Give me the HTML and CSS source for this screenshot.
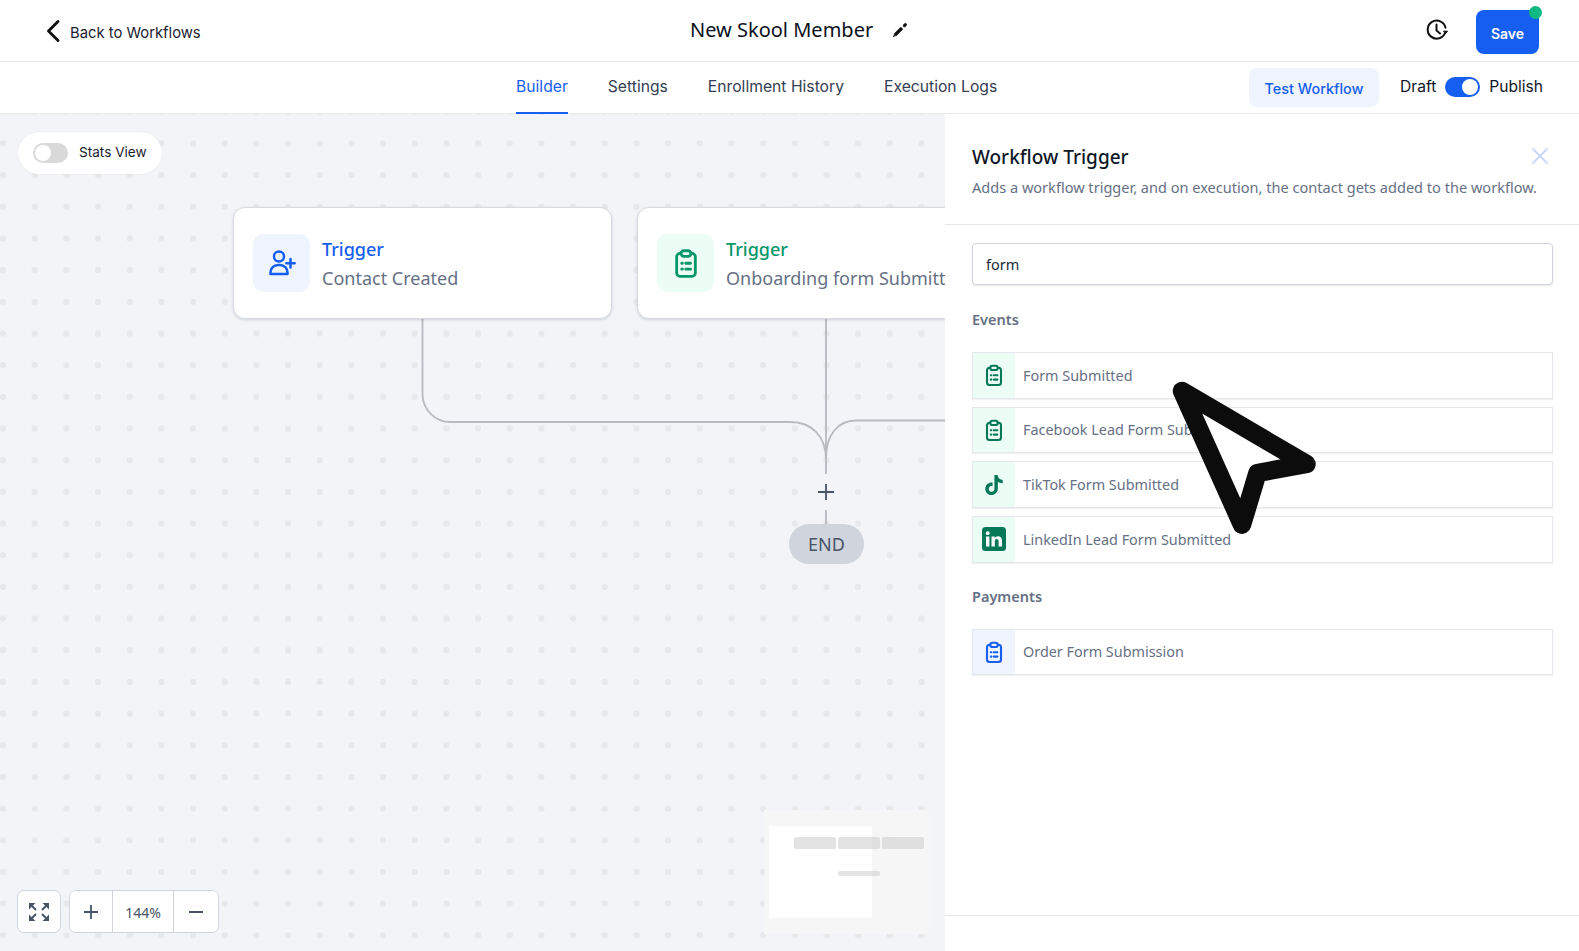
FILE: index.html

```html
<!DOCTYPE html>
<html lang="en">
<head>
  <meta charset="UTF-8" />
  <title>New Skool Member</title>
  <link rel="stylesheet" href="styles.css">
</head>
<body>

<svg class="defs" width="0" height="0">
  <symbol id="clipboard" viewBox="0 0 24 24">
    <path d="M8 4.800H7.500A2.500 2.500 0 0 0 5 7.300v12.200A2.500 2.500 0 0 0 7.500 22h9a2.500 2.500 0 0 0 2.500-2.500V7.300a2.500 2.500 0 0 0-2.500-2.500H16" fill="none" stroke="currentColor" stroke-width="2.100" stroke-linecap="round"/>
    <rect x="8.300" y="2.800" width="7.400" height="4.200" rx="2.100" fill="none" stroke="currentColor" stroke-width="2.100"/>
    <path d="M8.800 12.200h.5M11.800 12.200h3.600M8.800 16.600h.5M11.800 16.600h3.600" fill="none" stroke="currentColor" stroke-width="2.100" stroke-linecap="round"/>
  </symbol>
</svg>

<header class="topbar">
  <a class="back">
    <svg width="18" height="24" viewBox="0 0 18 24"><path d="M14 2.500 4.500 12l9.500 9.500" fill="none" stroke="#111" stroke-width="2.900" stroke-linecap="round" stroke-linejoin="round"/></svg>
    <span>Back to Workflows</span>
  </a>
  <div class="title">
    <h1>New Skool Member</h1>
    <svg width="16" height="16" viewBox="0 0 16 16"><path d="M3 13l7-7" fill="none" stroke="#111" stroke-width="3.200"/><path d="M1 15l1-3 2 2z" fill="#111"/><path d="M12.400 3.600l1-1" fill="none" stroke="#111" stroke-width="3" stroke-linecap="round"/></svg>
  </div>
  <div class="top-actions">
    <svg class="history" width="24" height="24" viewBox="0 0 24 24"><path d="M20.200 14.500A9 9 0 1 1 20.500 9.800" fill="none" stroke="#111" stroke-width="2" stroke-linecap="round"/><path d="M11.500 6.500v6l3.500 3" fill="none" stroke="#111" stroke-width="2" stroke-linecap="round" stroke-linejoin="round"/><path d="M18.500 13.200h4l-2 2.600z" fill="#111" stroke="#111" stroke-width="1" stroke-linejoin="round"/></svg>
    <button class="save">Save<i class="save-dot"></i></button>
  </div>
</header>

<nav class="tabbar">
  <ul class="tabs">
    <li class="active">Builder</li>
    <li>Settings</li>
    <li>Enrollment History</li>
    <li>Execution Logs</li>
  </ul>
  <div class="publish">
    <button class="test">Test Workflow</button>
    <span>Draft</span>
    <i class="switch on"></i>
    <span>Publish</span>
  </div>
</nav>

<main class="main">
  <section class="canvas">
    <div class="stats">
      <i class="switch"></i>
      <span>Stats View</span>
    </div>

    <svg class="wires" width="945" height="838" viewBox="0 0 945 838">
      <path d="M422.500 205v75a28 28 0 0 0 28 28H790c22 0 36 14 36 38M826 205v155M945 306.500H856c-18 0-30 14-30 38M826 396v14" fill="none" stroke="#b9bac0" stroke-width="1.800"/>
    </svg>

    <div class="node node-one">
      <div class="node-icon blue">
        <svg width="32" height="32" viewBox="0 0 32 32"><circle cx="13" cy="9.500" r="5" fill="none" stroke="currentColor" stroke-width="2.500"/><path d="M4.500 27v-1.500a7.500 7.500 0 0 1 7.500-7.500h2a7.500 7.500 0 0 1 7.500 7.500V27z" fill="none" stroke="currentColor" stroke-width="2.500" stroke-linejoin="round"/><path d="M24.500 12v8.500M20.300 16.200h8.400" fill="none" stroke="currentColor" stroke-width="2.500" stroke-linecap="round"/></svg>
      </div>
      <div class="node-text">
        <div class="node-kind blue-text">Trigger</div>
        <div class="node-name">Contact Created</div>
      </div>
    </div>

    <div class="node node-two">
      <div class="node-icon green">
        <svg width="32" height="32"><use href="#clipboard"/></svg>
      </div>
      <div class="node-text">
        <div class="node-kind green-text">Trigger</div>
        <div class="node-name">Onboarding form Submitted</div>
      </div>
    </div>

    <svg class="add" width="18" height="18" viewBox="0 0 18 18"><path d="M9 1v16M1 9h16" fill="none" stroke="#475467" stroke-width="1.800"/></svg>
    <div class="end">END</div>

    <div class="minimap">
      <div class="mini-view"></div>
      <i class="mini-bar b1"></i>
      <i class="mini-bar b2"></i>
      <i class="mini-bar b3"></i>
      <i class="mini-bar b4"></i>
    </div>

    <div class="zoom-tools">
      <button class="tool fit">
        <svg width="20" height="20" viewBox="0 0 20 20"><path d="M0 1h6.500L0 7.500zM20 1h-6.500L20 7.500zM0 19h6.500L0 12.500zM20 19h-6.500L20 12.500z" fill="#475467"/><path d="M3 4l4 4M17 4l-4 4M3 16l4-4M17 16l-4-4" fill="none" stroke="#475467" stroke-width="2"/></svg>
      </button>
      <div class="tool-group">
        <button class="tool">
          <svg width="16" height="16" viewBox="0 0 16 16"><path d="M8 1v14M1 8h14" fill="none" stroke="#475467" stroke-width="1.800"/></svg>
        </button>
        <span class="zoom-value">144%</span>
        <button class="tool">
          <svg width="16" height="16" viewBox="0 0 16 16"><path d="M1 8h14" fill="none" stroke="#475467" stroke-width="1.800"/></svg>
        </button>
      </div>
    </div>
  </section>

  <aside class="panel">
    <div class="panel-head">
      <div class="panel-title">
        <h2>Workflow Trigger</h2>
        <p>Adds a workflow trigger, and on execution, the contact gets added to the workflow.</p>
      </div>
      <svg class="close" width="18" height="18" viewBox="0 0 18 18"><path d="M2 2l14 14M16 2 2 16" fill="none" stroke="#c7d7fe" stroke-width="1.800" stroke-linecap="round"/></svg>
    </div>

    <div class="panel-body">
      <input class="search" type="text" value="form" />

      <h3>Events</h3>
      <div class="list">
        <div class="item">
          <div class="item-icon green"><svg width="24" height="24"><use href="#clipboard"/></svg></div>
          <span>Form Submitted</span>
        </div>
        <div class="item">
          <div class="item-icon green"><svg width="24" height="24"><use href="#clipboard"/></svg></div>
          <span>Facebook Lead Form Submitted</span>
        </div>
        <div class="item">
          <div class="item-icon green">
            <svg width="20" height="20" viewBox="0 0 24 24"><path fill="currentColor" d="M12.525.02c1.310-.020 2.610-.010 3.910-.020.080 1.530.630 3.090 1.750 4.170 1.120 1.110 2.700 1.620 4.240 1.790v4.030c-1.440-.050-2.890-.350-4.200-.970-.570-.260-1.100-.590-1.620-.930-.010 2.920.010 5.840-.020 8.750-.080 1.400-.540 2.790-1.350 3.940-1.310 1.920-3.580 3.170-5.910 3.210-1.430.080-2.860-.310-4.080-1.030-2.020-1.190-3.440-3.370-3.650-5.710-.020-.500-.030-1-.010-1.490.180-1.900 1.120-3.720 2.580-4.960 1.660-1.440 3.980-2.130 6.150-1.720.020 1.480-.040 2.960-.040 4.440-.990-.320-2.150-.230-3.020.370-.630.410-1.110 1.040-1.360 1.750-.210.510-.150 1.070-.140 1.610.240 1.640 1.820 3.020 3.500 2.870 1.120-.010 2.190-.660 2.770-1.610.190-.330.400-.670.410-1.060.100-1.790.060-3.570.070-5.360.010-4.030-.010-8.050.020-12.070z"/></svg>
          </div>
          <span>TikTok Form Submitted</span>
        </div>
        <div class="item">
          <div class="item-icon green">
            <svg width="24" height="24" viewBox="0 0 24 24"><rect width="24" height="24" rx="3.500" fill="currentColor"/><rect x="4" y="9.500" width="3.400" height="10" fill="#fff"/><circle cx="5.700" cy="6.200" r="1.900" fill="#fff"/><path d="M9.500 9.500h3.200v1.500c.7-1.100 1.900-1.800 3.300-1.800 2.700 0 4 1.700 4 4.500v5.800h-3.400v-5.200c0-1.500-.6-2.300-1.800-2.300s-2 .9-2 2.300v5.200H9.500z" fill="#fff"/></svg>
          </div>
          <span>LinkedIn Lead Form Submitted</span>
        </div>
      </div>

      <h3 class="second">Payments</h3>
      <div class="list">
        <div class="item">
          <div class="item-icon blue"><svg width="24" height="24"><use href="#clipboard"/></svg></div>
          <span>Order Form Submission</span>
        </div>
      </div>
    </div>

    <div class="panel-foot"></div>
  </aside>
</main>

<svg class="pointer" width="160" height="170" viewBox="0 0 160 170"><path d="M12 11 136.500 84 87.500 93 72 144.700z" fill="#fff" stroke="#0c0c0c" stroke-width="18.500" stroke-linejoin="round"/></svg>

</body>
</html>
```

FILE: styles.css

```css
* {
  box-sizing: border-box;
}
html, body {
  height: 100%;
}
body {
  font-family: "Noto Sans", Arial, sans-serif;
  margin: 0;
  background: #fff;
  color: #111;
  overflow: hidden;
  position: relative;
}
button {
  font-family: inherit;
}
.defs {
  position: absolute;
}

/* top bar */
.topbar {
  height: 62px;
  display: flex;
  align-items: center;
  position: relative;
  padding: 0 40px 0 44px;
  border-bottom: 1px solid #e9eaec;
}
.back {
  display: flex;
  align-items: center;
  gap: 8px;
  font-family: Inter, Arial, sans-serif;
  font-size: 14.800px;
  color: #1b2230;
}
.back span {
  padding-top: 4px;
}
.title {
  position: absolute;
  left: 690px;
  top: 13px;
  display: flex;
  align-items: center;
  gap: 19px;
}
.title h1 {
  margin: 0;
  font-size: 20px;
  font-weight: 400;
  color: #0c111d;
  line-height: 33px;
}
.top-actions {
  margin-left: auto;
  display: flex;
  align-items: center;
  gap: 27px;
  padding-top: 2px;
}
.history {
  margin-top: -3px;
}
.save {
  width: 63px;
  height: 44px;
  position: relative;
  border: none;
  border-radius: 8px;
  background: #155eef;
  color: #fff;
  font-family: Inter, Arial, sans-serif;
  font-size: 14px;
  font-weight: 600;
  padding-top: 5px;
}
.save-dot {
  position: absolute;
  top: -4px;
  right: -3px;
  width: 13px;
  height: 13px;
  border-radius: 50%;
  background: #10b981;
}

/* tabs */
.tabbar {
  height: 52px;
  display: flex;
  align-items: stretch;
  padding: 0 36px 0 516px;
  border-bottom: 1px solid #e9eaec;
  font-family: Inter, Arial, sans-serif;
}
.tabs {
  list-style: none;
  margin: 0;
  padding: 0;
  display: flex;
  gap: 40px;
  font-size: 15.700px;
  color: #344054;
}
.tabs li {
  padding-top: 15px;
  height: 52px;
}
.tabs .active {
  color: #155eef;
  border-bottom: 2px solid #155eef;
}
.publish {
  margin-left: auto;
  display: flex;
  align-items: center;
  gap: 9px;
  font-size: 15.600px;
  color: #101828;
  padding-bottom: 2px;
}
.test {
  width: 130px;
  height: 39px;
  margin: 2px 12px 0 0;
  border: none;
  border-radius: 8px;
  background: #eff4ff;
  color: #155eef;
  font-family: inherit;
  font-size: 14.400px;
  font-weight: 500;
  padding-top: 2px;
}
.switch {
  display: block;
  position: relative;
  width: 35px;
  height: 20px;
  border-radius: 10px;
  background: #d9d9d9;
}
.switch:after {
  content: "";
  position: absolute;
  left: 2px;
  top: 2px;
  width: 16px;
  height: 16px;
  border-radius: 50%;
  background: #fff;
}
.switch.on {
  background: #155eef;
}
.switch.on:after {
  left: 17px;
}

/* canvas */
.main {
  display: flex;
  height: 837px;
}
.canvas {
  position: relative;
  width: 945px;
  overflow: hidden;
  background-color: #f2f4f8;
  background-image: radial-gradient(circle, #e7e8ea 3px, transparent 3.500px);
  background-size: 31.680px 31.680px;
  background-position: -12.840px 13.660px;
}
.stats {
  position: absolute;
  left: 18px;
  top: 18px;
  width: 144px;
  height: 42px;
  display: flex;
  align-items: center;
  gap: 11px;
  padding-left: 15px;
  border-radius: 21px;
  background: #fff;
  box-shadow: 0 0 2px rgba(16, 24, 40, 0.08);
  font-family: Inter, Arial, sans-serif;
  font-size: 13.600px;
  color: #1b2230;
}
.stats span {
  padding-bottom: 2px;
}
.wires {
  position: absolute;
  left: 0;
  top: 0;
}
.node {
  position: absolute;
  top: 93px;
  width: 379px;
  height: 112px;
  display: flex;
  align-items: center;
  gap: 12px;
  padding-left: 19px;
  background: #fff;
  border: 1px solid #d8dae0;
  border-radius: 12px;
  box-shadow: 0 1px 3px rgba(16, 24, 40, 0.15);
}
.node-one {
  left: 233px;
}
.node-two {
  left: 637px;
  white-space: nowrap;
}
.node-icon {
  width: 57px;
  height: 58px;
  flex: none;
  display: flex;
  align-items: center;
  justify-content: center;
  border-radius: 10px;
}
.blue {
  background: #eff4ff;
  color: #155eef;
}
.green {
  background: #ebfdf4;
  color: #047857;
}
.node-icon.green {
  color: #059669;
}
.node-text {
  margin-top: 4px;
}
.node-kind {
  font-size: 18px;
  font-weight: 500;
  line-height: 26px;
}
.blue-text {
  color: #155eef;
}
.green-text {
  color: #059669;
}
.node-name {
  font-size: 18px;
  line-height: 33px;
  color: #667085;
}
.add {
  position: absolute;
  left: 817px;
  top: 369px;
}
.end {
  position: absolute;
  left: 789px;
  top: 410px;
  width: 75px;
  height: 40px;
  border-radius: 20px;
  background: #d0d5dd;
  color: #475467;
  font-size: 18px;
  line-height: 40px;
  text-align: center;
}
.minimap {
  position: absolute;
  left: 764px;
  top: 696px;
  width: 165px;
  height: 124px;
  background: rgba(245, 245, 245, 0.95);
}
.mini-view {
  position: absolute;
  left: 5px;
  top: 16px;
  width: 103px;
  height: 92px;
  background: #fff;
}
.mini-bar {
  position: absolute;
  top: 27px;
  width: 42px;
  height: 12px;
  border-radius: 2px;
  background: rgba(200, 200, 200, 0.5);
}
.b1 { left: 30px; }
.b2 { left: 74px; }
.b3 { left: 118px; }
.b4 {
  left: 74px;
  top: 61px;
  height: 5px;
}
.zoom-tools {
  position: absolute;
  left: 17px;
  top: 776px;
  display: flex;
  gap: 8px;
}
.tool {
  width: 42px;
  height: 43px;
  display: flex;
  align-items: center;
  justify-content: center;
  padding: 0;
  border: none;
  background: #fff;
}
.fit {
  width: 44px;
  border: 1px solid #d0d5dd;
  border-radius: 7px;
}
.tool-group {
  display: flex;
  height: 43px;
  border: 1px solid #d0d5dd;
  border-radius: 7px;
  overflow: hidden;
  background: #fff;
}
.tool-group .tool {
  height: 41px;
}
.tool-group .tool:last-child {
  width: 44px;
}
.zoom-value {
  width: 62px;
  border-left: 1px solid #d0d5dd;
  border-right: 1px solid #d0d5dd;
  font-size: 14px;
  line-height: 43px;
  text-align: center;
  color: #475467;
}

/* right panel */
.panel {
  width: 634px;
  display: flex;
  flex-direction: column;
  background: #fff;
}
.panel-head {
  height: 111px;
  display: flex;
  justify-content: space-between;
  padding: 29px 30px 0 27px;
  border-bottom: 1px solid #e4e7ec;
}
.panel-title {
  flex: 1;
  min-width: 0;
}
.panel-head h2 {
  margin: 0;
  font-size: 19px;
  font-weight: 500;
  line-height: 28px;
  color: #101828;
}
.panel-head p {
  margin: 5px 0 0;
  font-size: 14.550px;
  line-height: 22px;
  color: #667085;
  white-space: nowrap;
}
.close {
  flex: none;
  margin-top: 4px;
}
.panel-body {
  flex: 1;
  padding: 18px 26px 0 27px;
}
.search {
  display: block;
  width: 100%;
  height: 42px;
  padding: 0 13px;
  border: 1px solid #d0d5dd;
  border-radius: 4px;
  box-shadow: 0 1px 2px rgba(16, 24, 40, 0.1);
  font-family: inherit;
  font-size: 14.500px;
  color: #1d2939;
}
.panel-body h3 {
  margin: 24px 0 23px;
  font-size: 14.500px;
  font-weight: 600;
  line-height: 20px;
  color: #667085;
}
.panel-body .second {
  margin: 23px 0 23px;
}
.list {
  display: flex;
  flex-direction: column;
  gap: 8px;
}
.item {
  height: 46.670px;
  display: flex;
  align-items: center;
  gap: 8px;
  border: 1px solid #e4e7ec;
  box-shadow: 0 1px 1px rgba(16, 24, 40, 0.06);
  font-size: 14.400px;
  color: #667085;
}
.item-icon {
  width: 42px;
  height: 100%;
  display: flex;
  align-items: center;
  justify-content: center;
}
.panel-foot {
  height: 36px;
  border-top: 1px solid #e4e7ec;
}
.pointer {
  position: absolute;
  left: 1170px;
  top: 380px;
}
```
